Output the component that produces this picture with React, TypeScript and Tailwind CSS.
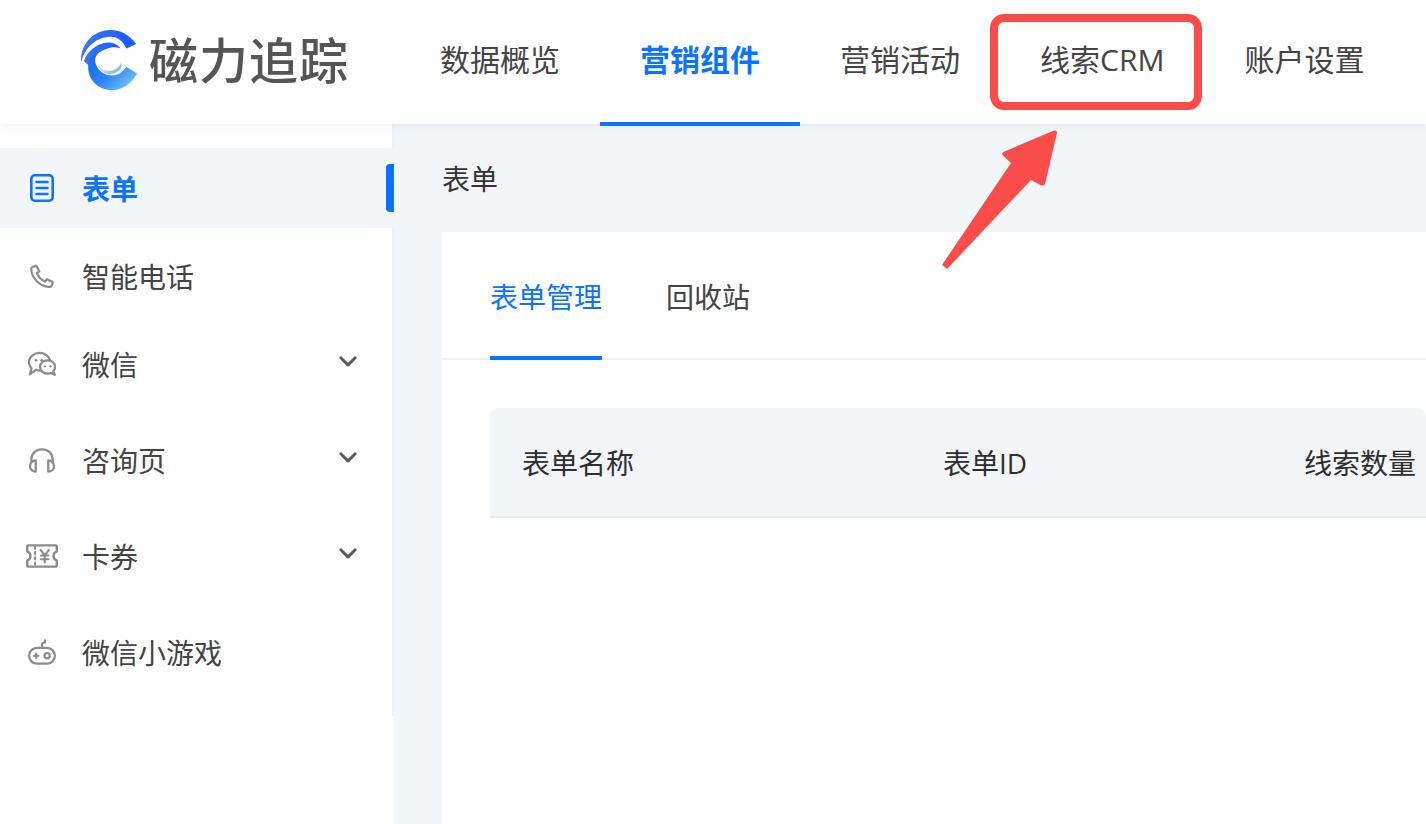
import React from "react";

const font = { fontFamily: '"Open Sans", "Noto Sans CJK SC", "Noto Sans", sans-serif' };

function Logo() {
  return (
    <svg width="58" height="62" viewBox="4 3 60 64" className="shrink-0">
      <defs>
        <linearGradient id="lg1" x1="0" y1="0.3" x2="1" y2="0.4">
          <stop offset="0" stopColor="#3a78f2" />
          <stop offset="1" stopColor="#1558ff" />
        </linearGradient>
        <linearGradient id="lg2" x1="0" y1="0" x2="1" y2="0.8">
          <stop offset="0" stopColor="#1c62f0" />
          <stop offset="0.55" stopColor="#2a86f5" />
          <stop offset="1" stopColor="#7cc6ff" />
        </linearGradient>
        <linearGradient id="lg3" x1="0" y1="0" x2="1" y2="0.6">
          <stop offset="0" stopColor="#ffffff" />
          <stop offset="1" stopColor="#7ab5fa" />
        </linearGradient>
      </defs>
      <path d="M62 18.5 C55 9 46 4 36 4 C19 4 7 16 5 33 C5 34 5 36 5.5 37 C9 21 22 11 36 11 C43 11 48 15 52 23 Z" fill="url(#lg1)" />
      <path d="M8 36 C12 26 21 18 32 17 C38 17 43 19 46 23 C41 21 36 21.5 31 23.5 C22 27 17 32 14 41 C12 40 10 38 8 36 Z" fill="url(#lg1)" />
      <path d="M13 37 C10 52 20 66 38 66 C48 66 57 60 63 49 L52 42 C48 48 43 51 37 51 C28 51 22 45 20 38 C19 34 20 31 23 28 C17 30 14 33 13 37 Z" fill="url(#lg2)" />
      <path d="M21 36 C23 43 29 47 36 46 C41 45 45 42 46 38 C48 41 47 44 43 47 C37 51 29 50 25 45 C23 42 21 39 21 36 Z" fill="url(#lg3)" />
    </svg>
  );
}

const stroke = { fill: "none", stroke: "#8c8c8c", strokeWidth: 2.4, strokeLinecap: "round", strokeLinejoin: "round" } as const;

function FormIcon() {
  return (
    <svg width="24" height="28" viewBox="0 0 24 28" fill="none" stroke="#0a73ff" strokeWidth="2.6" strokeLinecap="round" className="shrink-0">
      <rect x="1.3" y="1.3" width="21.4" height="25.4" rx="3.5" />
      <path d="M6.5 8h11M6.5 14h11M6.5 20h11" />
    </svg>
  );
}
function PhoneIcon() {
  return (
    <svg width="24" height="24" viewBox="0 0 26 26" {...stroke} className="shrink-0">
      <path d="M2 3.5 L7 1.8 L10 8 L7.5 10 C9 14 12 17.5 16.5 19 L18.5 16.5 L24.5 19.5 L24 22.5 C23.5 24.2 22.2 25 20.5 24.8 C10 23.8 2.4 15.5 1.4 6 C1.3 5 1.5 4.2 2 3.5 Z" />
    </svg>
  );
}
function WechatIcon() {
  return (
    <svg width="28" height="26" viewBox="0 0 30 26" {...stroke} className="shrink-0">
      <path d="M13 20 C11.5 20 10 19.8 8.6 19.3 L2 24 L3.8 17.5 C2 15.8 1 13.5 1 11 C1 5.5 6.2 1.2 12.5 1.2 C18 1.2 22.6 4.5 23.5 9" />
      <path d="M21 9 C26 9 29 12.3 29 16 C29 18 28.2 19.6 27 20.8 L28.8 24.5 L24.4 22.6 C23.4 23 22.2 23.2 21 23.2 C16.4 23.2 13 20 13 16 C13 12.2 16.4 9 21 9 Z" />
      <circle cx="8.5" cy="9" r="1" fill="#8c8c8c" strokeWidth="1" />
      <circle cx="14.5" cy="9" r="1" fill="#8c8c8c" strokeWidth="1" />
      <circle cx="18" cy="15.5" r="0.8" fill="#8c8c8c" strokeWidth="1" />
      <circle cx="24" cy="15.5" r="0.8" fill="#8c8c8c" strokeWidth="1" />
    </svg>
  );
}
function HeadsetIcon() {
  return (
    <svg width="28" height="25" viewBox="0 0 28 26" {...stroke} className="shrink-0">
      <path d="M3 15 V11.5 C3 5.5 7.5 1.4 14 1.4 C20.5 1.4 25 5.5 25 11.5 V15" />
      <path d="M7.5 13 V24.5 C4 24.5 1.5 22 1.5 18.7 C1.5 15.4 4 13 7.5 13 Z" />
      <path d="M20.5 13 V24.5 C24 24.5 26.5 22 26.5 18.7 C26.5 15.4 24 13 20.5 13 Z" />
    </svg>
  );
}
function TicketIcon() {
  return (
    <svg width="32" height="24" viewBox="0 0 34 26" fill="none" stroke="#8c8c8c" strokeWidth="2.6" strokeLinejoin="round" strokeLinecap="round" className="shrink-0">
      <path d="M2 1.5 H32 C32.6 1.5 33 1.9 33 2.5 V8 C30.5 9 29.5 11 29.5 13 C29.5 15 30.5 17 33 18 V23.5 C33 24.1 32.6 24.5 32 24.5 H2 C1.4 24.5 1 24.1 1 23.5 V18 C3.5 17 4.5 15 4.5 13 C4.5 11 3.5 9 1 8 V2.5 C1 1.9 1.4 1.5 2 1.5 Z" />
      <path d="M9.5 3 V23" strokeDasharray="2.5 3.2" strokeWidth="2.2" />
      <path d="M15.5 6.5 L20 12 L24.5 6.5 M20 12 V20 M16 12.5 H24 M16 16.5 H24" strokeWidth="2.2" />
    </svg>
  );
}
function GameIcon() {
  return (
    <svg width="28" height="27" viewBox="0 0 30 28" {...stroke} className="shrink-0">
      <rect x="1.2" y="9" width="27.6" height="17" rx="8.5" />
      <path d="M15 9 V5.5 C15 4 16 3.5 17.5 3.5 H18 V1" />
      <path d="M6.5 17.5 H11 M8.7 15.3 V19.7" />
      <circle cx="20.5" cy="17.5" r="2.8" />
    </svg>
  );
}
function Chevron() {
  return (
    <svg width="18" height="11" viewBox="0 0 18 11" fill="none" stroke="#595959" strokeWidth="3" strokeLinecap="round" strokeLinejoin="round" className="mb-[8px] shrink-0">
      <path d="M1.8 1.8 L9 9 L16.2 1.8" />
    </svg>
  );
}

const navItems = [
  { label: "数据概览" },
  { label: "营销组件", active: true },
  { label: "营销活动" },
  { label: "线索CRM" },
  { label: "账户设置" },
];

const menu = [
  { label: "智能电话", icon: <PhoneIcon />, row: "h-[88px]" },
  { label: "微信", icon: <WechatIcon />, chevron: true, row: "h-[88px]" },
  { label: "咨询页", icon: <HeadsetIcon />, chevron: true, row: "mt-[4px] h-[96px]" },
  { label: "卡券", icon: <TicketIcon />, chevron: true, row: "h-[96px]" },
  { label: "微信小游戏", icon: <GameIcon />, row: "h-[96px]" },
];

export default function App() {
  return (
    <div style={font} className="relative h-[824px] w-[1426px] overflow-hidden bg-white">
      <header className="relative z-10 flex h-[124px] items-stretch bg-white shadow-[0_2px_10px_rgba(0,0,0,0.06)]">
        <div className="flex w-[400px] items-center pb-[4px] pl-[80px]">
          <Logo />
          <span className="ml-[11px] text-[49px] leading-none font-medium tracking-[1px] text-[#555555]">磁力追踪</span>
        </div>
        {navItems.map((n) => (
          <div
            key={n.label}
            className={
              n.active
                ? "relative flex items-center px-[40px] pb-[6px] text-[30px] font-bold whitespace-nowrap text-[#0a73ff]"
                : "relative flex items-center px-[40px] pb-[6px] text-[30px] whitespace-nowrap text-[#444444]"
            }
          >
            <span>{n.label}</span>
            {n.active && <div className="absolute right-0 bottom-[-2px] left-0 h-[4px] bg-[#0a73ff]" />}
          </div>
        ))}
      </header>

      <div className="flex h-[700px]">
        <aside className="w-[394px] shrink-0 bg-white">
          <div className="h-[24px] border-r-2 border-[#eff1f4]" />
          <div className="relative flex h-[80px] items-center bg-[#f3f6f9] pl-[30px]">
            <FormIcon />
            <span className="ml-[28px] pt-[2px] text-[28px] font-bold text-[#0a73ff]">表单</span>
            <div className="absolute top-[16px] right-0 h-[48px] w-[8px] rounded-l-[4px] bg-[#0a73ff]" />
          </div>
          <div className="h-[488px] border-r-2 border-[#eff1f4] pt-[5px]">
            {menu.map((m) => (
              <div key={m.label} className={`flex ${m.row} items-center justify-between pr-[35px] pl-[28px]`}>
                <div className="flex items-center">
                  <div className="mb-[2px] flex w-[28px] justify-center">{m.icon}</div>
                  <span className="ml-[26px] text-[28px] text-[#444444]">{m.label}</span>
                </div>
                {m.chevron && <Chevron />}
              </div>
            ))}
          </div>
        </aside>

        <main className="flex-1 bg-[#f3f6f9] pl-[48px]">
          <div className="flex h-[108px] items-center pt-[2px] text-[28px] text-[#333333]">表单</div>
          <div className="h-[592px] bg-white">
            <div className="flex h-[128px] border-b-2 border-[#eff1f4] pl-[48px]">
              <div className="flex h-[128px] items-center border-b-4 border-[#0a73ff] pt-[6px] text-[28px] text-[#0a73ff]">表单管理</div>
              <div className="ml-[64px] flex h-[128px] items-center border-b-4 border-transparent pt-[6px] text-[28px] text-[#444444]">回收站</div>
            </div>
            <div className="mt-[48px] ml-[48px] flex h-[110px] items-center rounded-t-[8px] border-b-2 border-[#e9ecf0] bg-[#f3f6f9] pt-[2px] pl-[32px] text-[28px] text-[#2e2e2e]">
              <span className="w-[421px] shrink-0">表单名称</span>
              <span className="w-[361px] shrink-0">表单ID</span>
              <span className="whitespace-nowrap">线索数量</span>
            </div>
          </div>
        </main>
      </div>

      <div className="absolute top-[14px] left-[990px] z-20 h-[96px] w-[212px] rounded-[14px] border-[8px] border-[#fa4d4a]" />
      <svg className="absolute top-[120px] left-[930px] z-20" width="140" height="160" viewBox="0 0 140 160">
        <path d="M124 10.5 C126 10 127.5 11.5 127 13 L115.5 62 C115 65.5 112.5 66.5 110.5 65 L101 60 L17 149 L12 145 L81 43 L73.5 36 C71.5 34 72 32.5 74.5 31.5 Z" fill="#fa4d4a" />
      </svg>
    </div>
  );
}
